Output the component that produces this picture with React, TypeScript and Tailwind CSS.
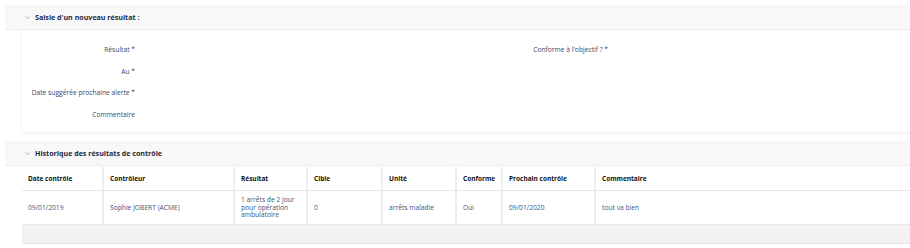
import { ChevronDown } from 'lucide-react'

const columns = [
    { label: 'Date contrôle', w: 'w-[82px]' },
    { label: 'Contrôleur', w: 'w-[131px]' },
    { label: 'Résultat', w: 'w-[73px]' },
    { label: 'Cible', w: 'w-[75px]' },
    { label: 'Unité', w: 'w-[74px]' },
    { label: 'Conforme', w: 'w-[46px]' },
    { label: 'Prochain contrôle', w: 'w-[93px]' },
    { label: 'Commentaire', w: 'flex-1' },
]

const row = [
    '09/01/2019',
    'Sophie JOBERT (ACME)',
    '1 arrêts de 2 jour pour opération ambulatoire',
    '0',
    'arrêts maladie',
    'Oui',
    '09/01/2020',
    'tout va bien',
]

function SectionHeader({ title }: { title: string }) {
    return (
        <div className="ml-[5px] flex h-[25px] items-center gap-[4px] border-b border-[#ececec] bg-[#f8f8f8] pl-[19px]">
            <ChevronDown className="h-[7px] w-[7px] text-[#7a8499]" strokeWidth={2} />
            <span className="text-[7.1px] font-bold text-[#1d2a44]">{title}</span>
        </div>
    )
}

export default function App() {
    return (
        <div className="h-[248px] w-[910px] overflow-hidden bg-white pt-[5px] font-['Open_Sans',sans-serif] text-[6.7px]">
            <SectionHeader title="Saisie d'un nouveau résultat :" />

            {/* Formulaire */}
            <div className="ml-[22px] h-[102px] w-[900px] rounded-[3px] bg-white shadow-[0_1px_3px_rgba(0,0,0,0.08)]">
                <div className="flex pt-[16px]">
                    <div className="flex w-[113px] flex-col items-end gap-[13.5px] text-[#3b4866]">
                        <span className="leading-[8px]">Résultat *</span>
                        <span className="leading-[8px]">Au *</span>
                        <span className="leading-[8px]">Date suggérée prochaine alerte *</span>
                        <span className="leading-[8px]">Commentaire</span>
                    </div>
                    <div className="flex w-[473px] justify-end text-[#3b4866]">
                        <span className="leading-[8px]">Conforme à l'objectif ? *</span>
                    </div>
                </div>
            </div>

            <div className="h-[9px]" />
            <SectionHeader title="Historique des résultats de contrôle" />

            {/* Tableau */}
            <div className="ml-[22px] mt-[1px] w-[900px] bg-white">
                <div className="flex h-[24px] border-b border-[#e8e8e8] text-[6.5px]">
                    {columns.map((c, i) => (
                        <div key={i} className={`${c.w} flex items-center border-r-2 border-[#ededed] pl-[6px] font-bold text-[#111]`}>
                            {c.label}
                        </div>
                    ))}
                </div>
                <div className="flex h-[34px] border-b border-[#e8e8e8]">
                    {row.map((v, i) => (
                        <div key={i} className={`${columns[i].w} flex items-center border-r-2 border-[#ededed] pl-[6px] pr-[4px] leading-[7.5px] text-[#3d5580]`}>
                            {v}
                        </div>
                    ))}
                </div>
                <div className="h-[19px] border-b border-[#e6e6e6] bg-[#f2f2f2]" />
            </div>
        </div>
    )
}
